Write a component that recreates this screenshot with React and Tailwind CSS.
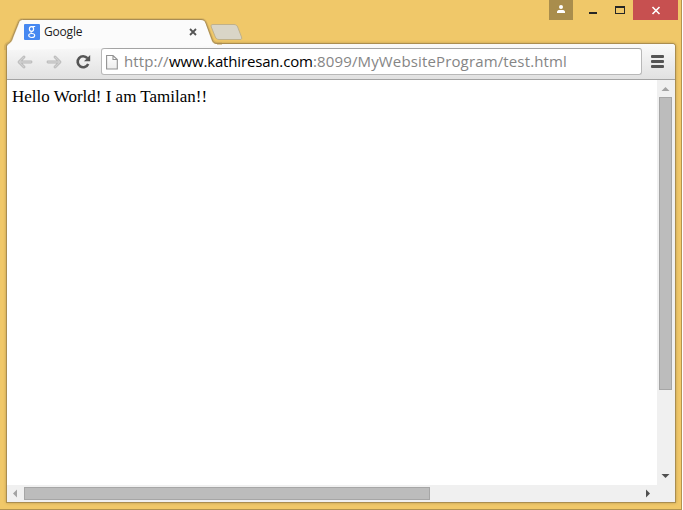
import React from "react";

function TabShape() {
  return (
    <svg className="absolute left-0 top-0 z-20" width="260" height="50" viewBox="0 0 260 50">
      <path d="M7 50 V46 C7 43.5 8 43.5 9.5 42.5 C11.5 41 12 38.5 13 36 L18 23.5 C19 20.5 20 19.5 22.5 19.5 H201 C204 19.5 205 20.5 206 23 L212 39 C213 42 214 43.5 217 43.5 V44 H210 V45 H12 C9 45 7.5 47 7 50 Z" fill="#fbfbfb" />
      <path d="M5.5 50 V46 C6 43.5 8 43.5 9.5 42.5 C11.5 41 12 38.5 13 36 L18 23.5 C19 20.5 20 19.5 22.5 19.5 H201 C204 19.5 205 20.5 206 23 L212 39 C213 42 214 43.5 217 43.5 H222" fill="none" stroke="#cba75a" strokeOpacity=".55" strokeWidth="3" />
      <path d="M8 50 V46 C8.5 44.5 9 44 10.5 43 C12.5 41.5 13 38.5 14 36 L19 23.8 C19.7 21 20.5 20 22.5 20 H201 C203.5 20 204.5 21 205.4 23 L211 39 C212 42 213 44 217 44 V46 Z" fill="#fbfbfb" />
      <path d="M6.5 50 V46 C7 43.8 8.5 43.5 9.5 42.5 C11.5 41 12 38.5 13 36 L18 23.5 C19 20.5 20 19.5 22.5 19.5 H201 C204 19.5 205 20.5 206 23 L212 39 C213 42 214 43.5 217 43.5 H222" fill="none" stroke="#a98d55" strokeWidth="1" />
      <path d="M213 24.5 H234 C236 24.5 237 25.5 237.7 27 L241.5 37 C242 39 241.5 39.5 240 39.5 H219 C217 39.5 216 38.5 215.3 37 L211.3 27 C210.7 25.5 211 24.5 213 24.5 Z" fill="#d9d5c7" stroke="#c0b18a" />
    </svg>
  );
}

function Favicon() {
  return (
    <div className="flex h-4 w-4 items-center justify-center rounded-[1px] bg-[#4688f1]">
      <svg width="16" height="16" viewBox="0 0 16 16" fill="none" stroke="white">
        <ellipse cx="7.5" cy="5" rx="2.1" ry="2.3" strokeWidth="1.2" />
        <path d="M8.3 2.5H11.2M8.4 7.3C6.3 8 6.5 8.6 8.4 9.5" strokeWidth="1" />
        <ellipse cx="7.7" cy="11.5" rx="3" ry="2" strokeWidth="1.1" />
      </svg>
    </div>
  );
}

function WindowControls() {
  return (
    <div className="ml-auto mr-[3px] flex h-5">
      <div className="w-6 bg-[#a98d4c]">
        <svg width="24" height="20" fill="white">
          <circle cx="12" cy="7" r="2" />
          <path d="M8 13V11.7C8 10.5 9.5 10 10.5 10H13.5C14.5 10 16 10.5 16 11.7V13Z" />
        </svg>
      </div>
      <svg width="60" height="20" shapeRendering="crispEdges">
        <path d="M16 12H24V14H16Z" fill="#262626" />
        <path d="M42 6H52V14H42ZM43 8V13H51V8Z" fill="#262626" fillRule="evenodd" />
      </svg>
      <div className="w-[45px] bg-[#c75050]">
        <svg width="45" height="20">
          <path d="M19.5 7L26.5 14M26.5 7L19.5 14" stroke="white" strokeWidth="1.6" />
        </svg>
      </div>
    </div>
  );
}

function Arrow({ flip }) {
  return (
    <svg width="16" height="14" viewBox="0 0 16 14" className={flip ? "-scale-x-100" : ""}>
      <path d="M7 2L2 7L7 12M2.5 7H14" fill="none" stroke="#b5b5b5" strokeWidth="2.8" strokeLinecap="round" strokeLinejoin="round" />
      <path d="M7 2L2 7L7 12M2.5 7H14" fill="none" stroke="#cfcfcf" strokeWidth="1.4" strokeLinecap="round" strokeLinejoin="round" />
    </svg>
  );
}

function Toolbar() {
  return (
    <div className="flex h-[36px] shrink-0 items-start rounded-t-[3px] border-b border-[#a3a3a3] bg-linear-to-b from-[#fafafa] to-[#e1e1e1] pl-[10px] pt-[4px]">
      <div className="flex h-[27px] items-center gap-[13px]">
        <Arrow />
        <Arrow flip />
        <svg width="16" height="16" viewBox="0 0 16 16">
          <path d="M12.4 4.2A5.5 5.5 0 1 0 13.2 10" fill="none" stroke="#555" strokeWidth="2.6" />
          <path d="M15.2 1V7.2H9Z" fill="#555" />
        </svg>
      </div>
      <div className="ml-[10px] flex h-[27px] w-[541px] items-center rounded-[3px] border border-[#b8b8b8] border-t-[#a3a3a3] bg-white pl-[4px]">
        <svg width="12" height="16" viewBox="0 0 12 16">
          <defs>
            <linearGradient id="page" x1="0" y1="0" x2="0" y2="1">
              <stop offset="0" stopColor="#fff" />
              <stop offset="1" stopColor="#ededed" />
            </linearGradient>
          </defs>
          <path d="M.6 1.5H7L11.3 5.5V15H.6ZM7 1.5V5.5H11" fill="url(#page)" stroke="#929292" strokeWidth="1.1" />
        </svg>
        <div className="ml-[6px] flex whitespace-nowrap font-['Open_Sans','Noto_Sans',sans-serif] text-[15px] leading-[25px] text-[#858585]">
          <span className="w-[45px] tracking-[0.08px]">http://</span>
          <span className="w-[144px] tracking-[-0.16px] text-black">www.kathiresan.com</span>
          <span className="tracking-[0.14px]">:8099/MyWebsiteProgram/test.html</span>
        </div>
      </div>
      <div className="ml-[9px] mt-[7px] flex w-[13px] flex-col gap-[2px]">
        <div className="h-[3px] rounded-[1px] bg-[#555]" />
        <div className="h-[3px] rounded-[1px] bg-[#555]" />
        <div className="h-[3px] rounded-[1px] bg-[#555]" />
      </div>
    </div>
  );
}

export default function App() {
  return (
    <div className="flex h-[510px] w-[683px] flex-col overflow-hidden bg-white">
      <div className="relative flex h-[510px] w-[682px] flex-col border-b border-r border-[#b3934f] bg-[#f0c869]">
        <TabShape />
        <header className="flex h-[44px] shrink-0">
          <div className="relative z-30 mt-6 flex h-4 w-[176px] items-center pl-6">
            <Favicon />
            <span className="ml-1 font-['Open_Sans','Noto_Sans',sans-serif] text-[12px] leading-4 tracking-[-0.2px] text-[#1c1c1c]">Google</span>
          </div>
          <svg className="relative z-30 ml-[13px] mt-7" width="8" height="8">
            <path d="M1 1L7 7M7 1L1 7" stroke="#555" strokeWidth="1.8" />
          </svg>
          <WindowControls />
        </header>
        <main className="relative z-10 ml-[7px] flex h-[458px] w-[668px] flex-col rounded-t-[3px] bg-white shadow-[0_0_0_1px_#aa8d50,0_0_3px_1px_#b8994f]">
          <Toolbar />
          <div className="flex h-[405px]">
            <div className="w-[650px] pl-[5px] pt-[7px] font-['Liberation_Serif',serif] text-[17px] leading-5 text-black">
              Hello World! I am Tamilan!!
            </div>
            <div className="flex w-[18px] flex-col items-center bg-[#f0f0f0]">
              <svg width="18" height="17" className="shrink-0">
                <path d="M4.5 11L8.5 7L12.5 11Z" fill="#a3a3a3" />
              </svg>
              <div className="mr-[2px] h-[293px] w-[13px] border border-[#a6a6a6] bg-[#bcbcbc]" />
              <svg width="18" height="17" className="mt-auto">
                <path d="M4.5 6L8.5 10L12.5 6Z" fill="#505050" />
              </svg>
            </div>
          </div>
          <div className="flex h-[17px] items-center bg-[#f0f0f0]">
            <svg width="17" height="17">
              <path d="M10 4.5V12.5L6 8.5Z" fill="#a3a3a3" />
            </svg>
            <div className="h-[13px] w-[406px] border border-[#a6a6a6] bg-[#bcbcbc]" />
            <svg width="12" height="17" className="ml-auto mr-[19px]">
              <path d="M2 4.5V12.5L6 8.5Z" fill="#505050" />
            </svg>
          </div>
        </main>
      </div>
    </div>
  );
}
